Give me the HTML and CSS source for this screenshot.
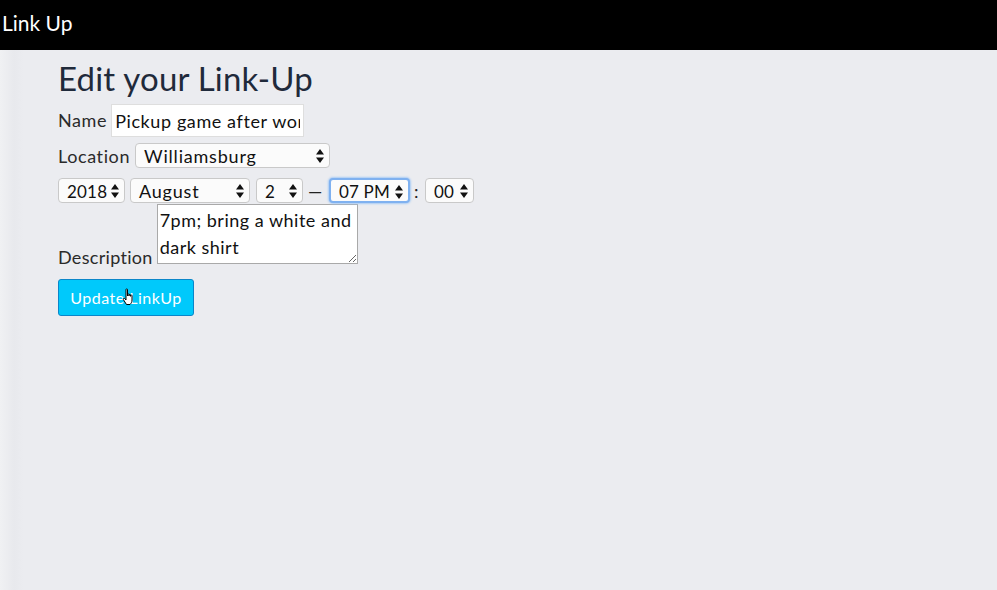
FILE: index.html
```html
<!DOCTYPE html>
<html lang="en">
<head>
<meta charset="utf-8">
<title>Link Up</title>
<link rel="stylesheet" href="styles.css">
</head>
<body>
<header class="topbar"><span class="brand">Link Up</span></header>
<main class="content">
  <h1 class="title">Edit your Link-Up</h1>
  <form class="form">
    <div class="row row-name">
      <label class="label">Name</label>
      <input class="text-input" type="text" value="Pickup game after work">
    </div>
    <div class="row row-location">
      <label class="label">Location</label>
      <span class="sel sel-location"><span class="sel-text">Williamsburg</span><svg class="arrows" viewBox="0 0 8 14"><path d="M4 0 L8 5.5 H0 Z M4 14 L8 8.5 H0 Z"/></svg></span>
    </div>
    <div class="row row-date">
      <span class="sel sel-year num"><span class="sel-text">2018</span><svg class="arrows" viewBox="0 0 8 14"><path d="M4 0 L8 5.5 H0 Z M4 14 L8 8.5 H0 Z"/></svg></span>
      <span class="sel sel-month"><span class="sel-text">August</span><svg class="arrows" viewBox="0 0 8 14"><path d="M4 0 L8 5.5 H0 Z M4 14 L8 8.5 H0 Z"/></svg></span>
      <span class="sel sel-day num"><span class="sel-text">2</span><svg class="arrows" viewBox="0 0 8 14"><path d="M4 0 L8 5.5 H0 Z M4 14 L8 8.5 H0 Z"/></svg></span>
      <span class="dash">—</span>
      <span class="sel sel-hour num"><span class="sel-text">07 PM</span><svg class="arrows" viewBox="0 0 8 14"><path d="M4 0 L8 5.5 H0 Z M4 14 L8 8.5 H0 Z"/></svg></span>
      <span class="colon">:</span>
      <span class="sel sel-min num"><span class="sel-text">00</span><svg class="arrows" viewBox="0 0 8 14"><path d="M4 0 L8 5.5 H0 Z M4 14 L8 8.5 H0 Z"/></svg></span>
    </div>
    <div class="row row-desc">
      <label class="label">Description</label>
      <textarea class="textarea">7pm; bring a white and dark shirt</textarea>
    </div>
    <div class="row row-btn">
      <span class="btn-wrap">
        <button class="btn" type="button">Update LinkUp</button>
        <svg class="cursor" viewBox="0 0 14 18"><path d="M4 1.5 C4 0.7 5.5 0.7 5.5 1.5 V8 V6.5 C5.5 5.7 7 5.7 7 6.5 V8 V7 C7 6.2 8.5 6.2 8.5 7 V8.3 V7.6 C8.5 6.9 10 6.9 10 7.6 V12 C10 14 9 15.5 8 16.5 H4.5 L1.3 11.5 C0.8 10.6 2 9.8 2.7 10.6 L4 12 Z" fill="#fff" stroke="#000" stroke-width="1"/></svg>
      </span>
    </div>
  </form>
</main>
</body>
</html>
```
FILE: styles.css
```css
html, body {
  margin: 0;
  padding: 0;
}
body {
  width: 997px;
  height: 590px;
  overflow: hidden;
  background: linear-gradient(to right, #f0f1f3 0px, #e8e9ed 14px, #ebecf0 24px, #ebecf0 100%);
  font-family: Lato, "Open Sans", sans-serif;
  color: #222;
}
.topbar {
  height: 50px;
  background: #000;
  display: flex;
  align-items: center;
  padding-left: 2px;
  box-sizing: border-box;
}
.brand {
  color: #fff;
  font-size: 21px;
  margin-top: -6px;
}
.content {
  padding-left: 58px;
}
.title {
  margin: 8px 0 0 0;
  font-weight: 400;
  font-size: 33px;
  line-height: 40px;
  color: #1f2a3b;
  letter-spacing: 0.2px;
}
.form {
  display: flex;
  flex-direction: column;
  align-items: flex-start;
}
.row {
  display: flex;
  align-items: center;
  font-size: 18px;
  letter-spacing: 0.6px;
}
.label {
  color: #2a2a2a;
}
.row-name {
  margin-top: 6px;
  height: 33px;
}
.row-name .label { margin-right: 4px; margin-top: -2px; }
.text-input {
  width: 193px;
  height: 33px;
  box-sizing: border-box;
  border: 1px solid #dedede;
  background: #fff;
  font: inherit;
  font-size: 18px;
  letter-spacing: 0.6px;
  padding: 0 3px;
  color: #111;
  outline: none;
}
.row-location {
  margin-top: 6px;
  height: 25px;
}
.row-location .label { margin-right: 5px; }
.sel {
  position: relative;
  display: inline-flex;
  align-items: center;
  height: 25px;
  box-sizing: border-box;
  border: 1px solid #c9c9c9;
  border-radius: 4px;
  background: #fbfbfb;
  font-size: 18px;
  letter-spacing: 0.8px;
  color: #111;
  padding-left: 8px;
}
.sel.num {
  font-size: 17px;
  letter-spacing: 0.2px;
}
.sel-text {
  line-height: 1;
  margin-top: 1px;
}
.arrows {
  position: absolute;
  right: 5px;
  top: 5px;
  width: 8px;
  height: 14px;
  fill: #111;
}
.sel-location { width: 195px; }
.row-date {
  margin-top: 10px;
  height: 25px;
}
.sel-year { width: 67px; }
.sel-month { width: 120px; margin-left: 5px; }
.sel-day { width: 47px; margin-left: 6px; }
.dash { margin: 0 6px 0 5px; color: #222; }
.sel-hour {
  width: 81px;
  border: 2px solid #7fb1f0;
  box-shadow: 0 0 2px 1px #a9ccf5;
  padding-left: 8px;
}
.colon { margin: 0 6px 0 4px; }
.sel-min { width: 49px; }
.row-desc {
  align-items: flex-end;
  margin-top: 1px;
}
.row-desc .label {
  margin-right: 4px;
  margin-bottom: -4px;
  letter-spacing: 0.3px;
}
.textarea {
  width: 201px;
  height: 60px;
  box-sizing: border-box;
  border: 1px solid #a9a9a9;
  background: #fff;
  font-family: inherit;
  font-size: 18px;
  letter-spacing: 0.5px;
  line-height: 27px;
  padding: 2px 2px 0 2px;
  margin: 0;
  color: #111;
  overflow: hidden;
  resize: both;
}
.row-btn {
  margin-top: 15px;
}
.btn-wrap {
  position: relative;
  display: inline-block;
}
.btn {
  width: 136px;
  height: 37px;
  background: #00c9fb;
  border: 1px solid #0b86c9;
  border-radius: 3px;
  color: #fff;
  font-family: inherit;
  font-size: 16px;
  letter-spacing: 0.5px;
  padding: 0;
}
.cursor {
  position: absolute;
  left: 64px;
  top: 9px;
  width: 14px;
  height: 18px;
}
```
